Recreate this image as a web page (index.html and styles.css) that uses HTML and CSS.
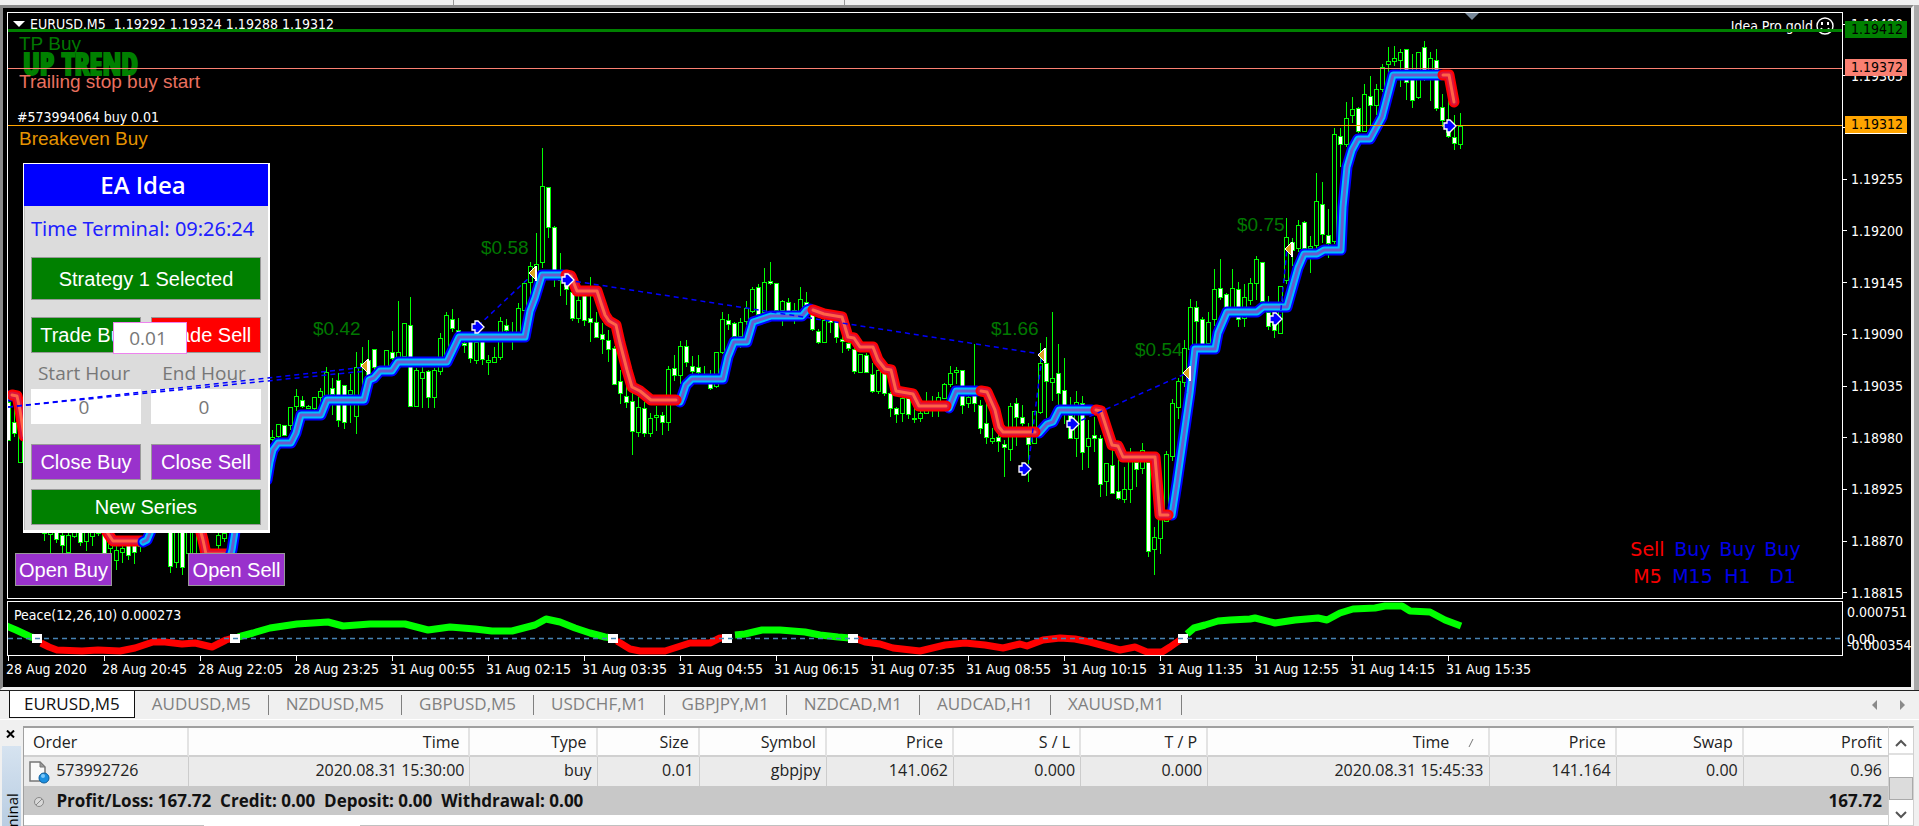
FILE: index.html
```html
<!DOCTYPE html>
<html lang="en">
  <head>
    <meta charset="UTF-8" />
    <meta name="viewport" content="width=device-width, initial-scale=1.0" />
    <title>EURUSD,M5</title>
    <link rel="stylesheet" href="styles.css">
  </head>
  <body>
    <div class="toolbar-edge">
      <span></span>
      <span></span>
    </div>

    <main class="chart-window">
      <section class="plot" id="plot">
        <svg class="layer" id="candles"></svg>

        <div class="chart-title">
          <svg width="12" height="6" viewBox="0 0 12 6">
            <path d="M0 0h12L6 6z" fill="#fff" />
          </svg>
          <span>EURUSD,M5&nbsp; 1.19292 1.19324 1.19288 1.19312</span>
        </div>
        <div class="expert">
          <span>Idea Pro gold</span>
          <svg width="18" height="18" viewBox="0 0 18 18" fill="none" stroke="#fff">
            <circle cx="9" cy="9" r="8" stroke-width="1.4" />
            <path d="M5 11c1 3 7 3 8 0" stroke-width="1.4" />
            <path d="M6 5v3M12 5v3" stroke-width="2" />
          </svg>
        </div>

        <form class="ea-panel">
          <h1 class="ea-title">EA Idea</h1>
          <div class="ea-body">
            <div class="ea-time">Time Terminal: 09:26:24</div>
            <button type="button" class="btn green strategy">Strategy 1 Selected</button>
            <div class="ea-row trade">
              <button type="button" class="btn green">Trade Buy</button>
              <button type="button" class="btn red">Trade Sell</button>
              <input class="lot" type="text" value="0.01" aria-label="Lot size" />
            </div>
            <div class="ea-row hours">
              <label for="startHour">Start Hour</label>
              <label for="endHour">End Hour</label>
              <input id="startHour" type="text" value="0" />
              <input id="endHour" type="text" value="0" />
            </div>
            <div class="ea-row close">
              <button type="button" class="btn purple">Close Buy</button>
              <button type="button" class="btn purple">Close Sell</button>
            </div>
            <button type="button" class="btn green">New Series</button>
          </div>
        </form>

        <div class="open-buttons">
          <button type="button" class="btn purple">Open Buy</button>
          <button type="button" class="btn purple">Open Sell</button>
        </div>

        <div class="signals">
          <span class="sell">Sell</span><span>Buy</span><span>Buy</span><span>Buy</span>
          <span class="sell">M5</span><span>M15</span><span>H1</span><span>D1</span>
        </div>

        <svg class="layer overlay" id="trades"></svg>
      </section>

      <aside class="price-axis">
        <ul>
          <li>1.19420</li>
          <li>1.19365</li>
          <li>1.19310</li>
          <li>1.19255</li>
          <li>1.19200</li>
          <li>1.19145</li>
          <li>1.19090</li>
          <li>1.19035</li>
          <li>1.18980</li>
          <li>1.18925</li>
          <li>1.18870</li>
          <li>1.18815</li>
        </ul>
        <span class="tag tp">1.19412</span>
        <span class="tag trailing">1.19372</span>
        <span class="tag breakeven">1.19312</span>
      </aside>

      <section class="indicator">
        <svg class="layer" id="indicator"></svg>
        <span class="indicator-name">Peace(12,26,10) 0.000273</span>
      </section>

      <aside class="indicator-axis">
        <span class="max">0.000751</span>
        <span class="zero">0.00</span>
        <span class="min">-0.000354</span>
      </aside>

      <ol class="time-axis">
        <li>28 Aug 2020</li>
        <li>28 Aug 20:45</li>
        <li>28 Aug 22:05</li>
        <li>28 Aug 23:25</li>
        <li>31 Aug 00:55</li>
        <li>31 Aug 02:15</li>
        <li>31 Aug 03:35</li>
        <li>31 Aug 04:55</li>
        <li>31 Aug 06:15</li>
        <li>31 Aug 07:35</li>
        <li>31 Aug 08:55</li>
        <li>31 Aug 10:15</li>
        <li>31 Aug 11:35</li>
        <li>31 Aug 12:55</li>
        <li>31 Aug 14:15</li>
        <li>31 Aug 15:35</li>
      </ol>
    </main>

    <nav class="chart-tabs">
      <a href="#" class="active">EURUSD,M5</a>
      <a href="#">AUDUSD,M5</a>
      <a href="#">NZDUSD,M5</a>
      <a href="#">GBPUSD,M5</a>
      <a href="#">USDCHF,M1</a>
      <a href="#">GBPJPY,M1</a>
      <a href="#">NZDCAD,M1</a>
      <a href="#">AUDCAD,H1</a>
      <a href="#">XAUUSD,M1</a>
      <div class="tab-scroll">
        <button type="button" aria-label="Scroll tabs left">
          <svg width="5" height="10" viewBox="0 0 5 10"><path d="M5 0v10L0 5z" fill="#8a8a8a" /></svg>
        </button>
        <button type="button" aria-label="Scroll tabs right">
          <svg width="5" height="10" viewBox="0 0 5 10"><path d="M0 0v10l5-5z" fill="#8a8a8a" /></svg>
        </button>
      </div>
    </nav>

    <section class="terminal">
      <div class="terminal-side">
        <button type="button" aria-label="Close">
          <svg width="9" height="8" viewBox="0 0 9 8" fill="none" stroke="#000" stroke-width="2">
            <path d="M1 0.5l7 7M8 0.5l-7 7" />
          </svg>
        </button>
        <div class="terminal-name"><span>Terminal</span></div>
      </div>

      <div class="orders">
        <table>
          <colgroup>
            <col class="w-order" />
            <col class="w-time" />
            <col class="w-price" />
            <col class="w-size" />
            <col class="w-price" />
            <col class="w-price" />
            <col class="w-price" />
            <col class="w-price" />
            <col class="w-time" />
            <col class="w-price" />
            <col class="w-price" />
            <col class="w-profit" />
          </colgroup>
          <thead>
            <tr>
              <th>Order</th>
              <th>Time</th>
              <th>Type</th>
              <th>Size</th>
              <th>Symbol</th>
              <th>Price</th>
              <th>S / L</th>
              <th>T / P</th>
              <th class="sorted">Time
                <svg width="6" height="10" viewBox="0 0 6 10"><path d="M1 9l4-8" stroke="#777" fill="none" /></svg>
              </th>
              <th>Price</th>
              <th>Swap</th>
              <th>Profit</th>
            </tr>
          </thead>
          <tbody>
            <tr>
              <td>
                <svg width="22" height="24" viewBox="0 0 22 24">
                  <path d="M2 2h10l5 5v14H2z" fill="#fafafa" stroke="#777" stroke-width="1.5" />
                  <path d="M12 2v5h5z" fill="#999" stroke="#777" />
                  <circle cx="16" cy="18" r="5" fill="#1b8fe0" stroke="#0c5c9a" />
                  <circle cx="15" cy="16" r="2" fill="#7cc8f8" />
                </svg>
                <span>573992726</span>
              </td>
              <td>2020.08.31 15:30:00</td>
              <td>buy</td>
              <td>0.01</td>
              <td>gbpjpy</td>
              <td>141.062</td>
              <td>0.000</td>
              <td>0.000</td>
              <td>2020.08.31 15:45:33</td>
              <td>141.164</td>
              <td>0.00</td>
              <td>0.96</td>
            </tr>
          </tbody>
          <tfoot>
            <tr>
              <td colspan="11">
                <svg width="22" height="12" viewBox="0 0 22 12" fill="none" stroke="#888">
                  <circle cx="11" cy="6" r="4.5" fill="#d8d8d8" />
                  <path d="M8 9l6-6" />
                </svg>
                <span>Profit/Loss: 167.72&nbsp; Credit: 0.00&nbsp; Deposit: 0.00&nbsp; Withdrawal: 0.00</span>
              </td>
              <td>167.72</td>
            </tr>
          </tfoot>
        </table>
        <div class="terminal-edge"><span></span></div>
      </div>

      <div class="scrollbar">
        <button type="button" aria-label="Scroll up">
          <svg width="12" height="8" viewBox="0 0 12 8" fill="none" stroke="#555" stroke-width="2"><path d="M1 7l5-5 5 5" /></svg>
        </button>
        <div class="track"></div>
        <div class="thumb"></div>
        <button type="button" aria-label="Scroll down">
          <svg width="12" height="8" viewBox="0 0 12 8" fill="none" stroke="#555" stroke-width="2"><path d="M1 1l5 5 5-5" /></svg>
        </button>
      </div>
    </section>

    <script src="chart.js"></script>
  </body>
</html>
```

FILE: styles.css
```css
* {
  margin: 0;
  padding: 0;
  box-sizing: border-box;
}

body {
  min-height: 100vh;
  display: flex;
  flex-direction: column;
  background: #f0f0f0;
  font-family: "Open Sans", sans-serif;
  overflow: hidden;
}

button {
  font: inherit;
  cursor: pointer;
}

.toolbar-edge {
  height: 5px;
  display: flex;
  background: #f0f0f0;
}

.toolbar-edge span {
  width: 454px;
  border-right: 1px solid #999;
}

.toolbar-edge span + span {
  width: 391px;
}

/* chart window */

.chart-window {
  flex: 1;
  display: grid;
  grid-template-columns: 1fr 68px;
  grid-template-rows: 1fr 55px 29px;
  row-gap: 2px;
  padding: 4px 0 0 4px;
  margin-right: 5px;
  background: #000;
  color: #fff;
  border-top: 3px solid #8a8a8a;
  border-left: 3px solid #8a8a8a;
  border-right: 3px solid #f0f0f0;
  border-bottom: 3px solid #f0f0f0;
  outline: 5px solid #a9a9a9;
  outline-offset: 0;
  clip-path: inset(0 -5px 0 0);
  font-family: "DejaVu Sans Condensed", "Noto Sans", sans-serif;
  font-size: 14px;
  line-height: 16px;
}

.plot,
.indicator {
  position: relative;
  border: 1px solid #fff;
  overflow: hidden;
}

.plot {
  min-height: 587px;
}

.layer {
  position: absolute;
  top: 0;
  left: 0;
  width: 100%;
  height: 100%;
}

.overlay {
  pointer-events: none;
}

.chart-title {
  position: absolute;
  top: 3px;
  left: 5px;
  display: flex;
  align-items: center;
  gap: 5px;
}

.expert {
  position: absolute;
  top: 4px;
  right: 8px;
  display: flex;
  align-items: center;
  gap: 3px;
}

.chart-text {
  font-family: "Liberation Sans", sans-serif;
  font-size: 19px;
}

.profit-text {
  font-family: "Liberation Sans", sans-serif;
  font-size: 19px;
  fill: #007800;
}

.order-text {
  font-size: 14px;
  fill: #fff;
}

.trend-text {
  font-family: Impact, "Open Sans Condensed", "Roboto Condensed", "Liberation Sans", sans-serif;
  font-size: 30px;
  font-weight: 700;
  fill: #008000;
  stroke: #008000;
  stroke-width: 2px;
}

/* expert advisor panel */

.ea-panel {
  position: absolute;
  top: 150px;
  left: 15px;
  width: 247px;
  background: #dcdcdc;
  border: 1px solid #fff;
  border-right-width: 2px;
  border-bottom-width: 3px;
}

.ea-title {
  height: 42px;
  background: #0000ff;
  text-align: center;
  padding-right: 6px;
  font: 600 24px/42px "Open Sans", sans-serif;
}

.ea-body {
  display: flex;
  flex-direction: column;
  padding: 0 7px 5px 6px;
  border-left: 1px solid #bbb;
}

.ea-time {
  height: 51px;
  font: 20px/46px "Noto Sans", sans-serif;
  color: #2020ff;
  white-space: nowrap;
}

.btn {
  height: 36px;
  border: 1px solid #999;
  color: #fff;
  font-family: "Liberation Sans", sans-serif;
  font-size: 20px;
  white-space: nowrap;
}

.green {
  background: #008000;
}

.red {
  background: #ff0000;
}

.purple {
  background: #9932cc;
}

.strategy {
  height: 43px;
}

.ea-row {
  display: grid;
  grid-template-columns: 1fr 1fr;
  column-gap: 10px;
}

.ea-row input {
  width: 100%;
  height: 35px;
  border: 0;
  padding-right: 4px;
  background: #fff;
  color: #777;
  text-align: center;
  font: 19px "Open Sans", sans-serif;
}

.trade {
  position: relative;
  margin-top: 17px;
}

.trade .lot {
  position: absolute;
  top: 5px;
  left: 82px;
  width: 74px;
  height: 32px;
  border: 1px solid #ee82ee;
}

.hours label {
  height: 36px;
  padding-right: 4px;
  line-height: 40px;
  text-align: center;
  color: #777;
  font-family: "Open Sans", sans-serif;
  font-size: 19px;
}

.close {
  margin: 20px 0 9px;
}

.open-buttons {
  position: absolute;
  top: 540px;
  left: 7px;
  display: flex;
  gap: 76px;
}

.open-buttons .btn {
  width: 97px;
  height: 33px;
}

.signals {
  position: absolute;
  right: 37px;
  bottom: 8px;
  display: grid;
  grid-template-columns: repeat(4, 45px);
  text-align: center;
  font: 19px/27px "DejaVu Sans", sans-serif;
  color: #0000e8;
}

.signals .sell {
  color: #f80000;
}

/* axes */

.price-axis,
.indicator-axis {
  position: relative;
}

.price-axis ul {
  height: calc(100% + 2px);
  padding: 4px 0 0;
  display: flex;
  flex-direction: column;
  justify-content: space-between;
  list-style: none;
}

.price-axis li {
  display: flex;
  align-items: center;
  gap: 4px;
}

.price-axis li::before {
  content: "";
  width: 4px;
  height: 1px;
  background: #fff;
}

.tag {
  position: absolute;
  left: 2px;
  width: 62px;
  height: 17px;
  padding-left: 6px;
  color: #000;
}

.tag.tp {
  top: 9px;
  background: #008000;
}

.tag.trailing {
  top: 47px;
  background: #fa8072;
}

.tag.breakeven {
  top: 104px;
  height: 18px;
  background: #ffa500;
  border-bottom: 1px solid #fff;
}

.indicator-name {
  position: absolute;
  top: 5px;
  left: 6px;
}

.indicator-axis span {
  position: absolute;
  left: 4px;
  white-space: nowrap;
}

.indicator-axis .max {
  top: 3px;
}

.indicator-axis .zero {
  top: 30px;
}

.indicator-axis .min {
  top: 36px;
}

.time-axis {
  grid-column: 1 / -1;
  display: flex;
  list-style: none;
  margin: -2px 0 0 -1px;
}

.time-axis li {
  width: 96px;
  flex: none;
  white-space: nowrap;
}

.time-axis li::before {
  content: "";
  display: block;
  width: 1px;
  height: 5px;
  margin-left: 2px;
  background: #fff;
}

/* chart tabs */

.chart-tabs {
  height: 29px;
  display: flex;
  align-items: flex-start;
  padding-left: 9px;
  border-top: 1px solid #222;
  font-size: 17px;
  line-height: 26px;
}

.chart-tabs a {
  position: relative;
  padding: 0 18px 0 17px;
  color: #808080;
  text-decoration: none;
}

.chart-tabs a:not(.active)::after {
  content: "";
  position: absolute;
  top: 4px;
  right: 0;
  width: 1px;
  height: 20px;
  background: #808080;
}

.chart-tabs .active {
  padding: 0 14px;
  background: #fff;
  color: #111;
  border: 1px solid #111;
  border-top: 0;
}

.tab-scroll {
  margin-left: auto;
  padding-right: 4px;
  display: flex;
  gap: 3px;
}

.tab-scroll button {
  width: 25px;
  border: 0;
  background: none;
}

/* terminal */

.terminal {
  height: 107px;
  display: flex;
  padding: 6px 5px 0 0;
  border-top: 1px solid #fff;
  overflow: hidden;
}

.terminal-side {
  width: 23px;
  display: flex;
  flex-direction: column;
}

.terminal-side button {
  height: 20px;
  border: 0;
  background: none;
  line-height: 8px;
  padding: 0 3px 6px 0;
}

.terminal-name {
  flex: 1;
  margin: 0 2px;
  background: linear-gradient(#d6e3f0, #b9cde2);
  overflow: hidden;
}

.terminal-name span {
  display: block;
  margin-top: 47px;
  writing-mode: vertical-rl;
  transform: rotate(180deg);
  height: 66px;
  font-size: 15px;
  line-height: 20px;
  text-align: right;
}

.orders {
  flex: 1;
  display: flex;
  flex-direction: column;
  justify-content: space-between;
  background: #fff;
  border-top: 2px solid #a0a0a0;
  border-left: 1px solid #a0a0a0;
}

table {
  width: 100%;
  table-layout: fixed;
  border-collapse: separate;
  border-spacing: 0;
  font-size: 16px;
  line-height: 22px;
  color: #222;
}

.w-order {
  width: 165px;
}

.w-time {
  width: 281px;
}

.w-price {
  width: 127px;
}

.w-size {
  width: 102px;
}

.w-profit {
  width: 144px;
}

th,
td {
  height: 29px;
  text-align: right;
  font-weight: 400;
  white-space: nowrap;
}

th {
  background: #fdfdfd;
  padding-right: 9px;
  border-right: 2px solid #e3e3e3;
  border-bottom: 2px solid #d0d0d0;
}

td {
  background: #ebebeb;
  padding: 0 5px 3px 0;
  border-right: 1px solid #ccc;
}

th:first-child,
td:first-child {
  text-align: left;
}

th:first-child {
  padding-left: 9px;
}

td:first-child {
  padding-left: 4px;
}

td svg {
  vertical-align: middle;
  margin: -4px 2px -4px 0;
}

.sorted svg {
  margin: 0 5px 0 14px;
}

th:last-child,
td:last-child {
  border-right: 0;
  padding-right: 6px;
}

tfoot td {
  padding-bottom: 0;
  background: #c8c8c8;
  border: 0;
  font-size: 17px;
  font-weight: 700;
  color: #111;
}

.terminal-edge {
  height: 1px;
  background: #c0c0c0;
}

.terminal-edge span {
  display: block;
  width: 156px;
  height: 1px;
  margin-left: 180px;
  background: #fff;
}

.scrollbar {
  width: 26px;
  display: flex;
  flex-direction: column;
  border: 1px solid #d0d0d0;
  border-top: 2px solid #a0a0a0;
  background: #fff;
}

.scrollbar button {
  height: 25px;
  border: 0;
  background: #fff;
  line-height: 20px;
}

.track {
  height: 24px;
  border-top: 2px solid #e0e0e0;
}

.thumb {
  flex: 1;
  background: #dcdcdc;
  border: 1px solid #aaa;
}
```

FILE: chart.js
```js
// Candles: [high, body top, body bottom, low, up], one every 6px from x.
const STEP = 6;
const SERIES = [
  { x: 8, bars: [[400,402,440,441,0],[400,422,433,437,0],[430,433,462,463,1]] },
  { x: 44, bars: [
    [528,530,533,541,1],[528,530,534,553,1],[528,530,539,543,0],[528,535,545,553,0],
    [528,535,552,554,1],[528,530,536,538,1],[528,530,542,546,0],[528,530,541,551,1],
    [528,530,536,546,1],[520,530,533,536,1],[520,525,553,554,0],[530,535,548,556,1],
    [545,550,560,570,1],[540,548,552,563,1],[540,545,555,560,0],[540,545,552,564,0],
    [540,543,546,552,1]] },
  { x: 170, bars: [
    [525,528,566,573,0],[525,528,562,568,1],[525,528,567,575,0],[525,528,553,560,1],
    [525,528,553,555,1]] },
  { x: 218, bars: [[530,535,545,552,1],[530,533,538,542,1]] },
  { x: 272, bars: [
    [430,437,439,441,1],[424,424,436,440,1],[425,425,435,436,0],[407,407,425,430,1],
    [389,396,406,411,1],[396,400,406,408,0],[405,406,408,409,1],[397,397,408,412,1],
    [388,391,397,405,1],[367,372,395,396,1],[378,388,394,415,0],[373,380,420,427,0],
    [385,385,422,429,0],[374,390,394,423,1],[352,367,416,434,1],[347,363,367,395,0],
    [340,360,375,378,0],[349,349,367,371,0],[368,370,372,375,1],[350,350,369,370,1],
    [331,352,358,360,0],[301,352,357,360,1],[323,323,356,358,1],[297,325,406,407,0],
    [368,370,406,407,1],[365,372,378,408,1],[370,371,397,408,0],[368,370,397,408,1],
    [333,338,371,375,1],[312,315,355,360,1],[309,319,328,332,0],[318,330,332,333,0],
    [340,343,345,353,0],[338,340,358,363,0],[338,342,360,364,1],[335,338,359,365,0],
    [355,360,362,375,1],[347,357,362,363,1],[317,321,357,360,1],[319,325,330,335,0],
    [322,332,336,350,1],[303,308,332,334,1],[281,283,310,311,1],[262,266,282,296,1],
    [233,264,275,280,1],[148,186,262,268,1],[187,187,227,238,0],[226,227,275,287,0],
    [253,275,280,296,0],[280,282,289,305,0],[285,292,318,321,0],[296,300,318,323,1],
    [290,294,320,326,0],[277,318,322,342,0],[312,322,337,338,0],[323,334,339,354,0],
    [330,340,349,362,0],[346,348,384,385,0],[370,381,393,404,0],[385,396,402,408,0],
    [392,401,431,455,0],[397,407,432,437,1],[402,408,433,437,0],[413,418,433,437,1],
    [406,415,417,431,1],[412,415,422,435,0],[366,369,422,431,1],[355,368,375,381,0],
    [341,346,375,384,1],[340,346,362,367,0],[356,366,371,374,0],[355,367,372,376,0],
    [366,374,376,380,1],[370,383,388,390,0],[352,352,386,388,1],[312,319,352,354,1],
    [314,320,324,330,0],[322,323,336,339,0],[318,322,336,348,1],[301,308,321,325,1],
    [287,289,311,313,1],[284,287,314,316,0],[268,282,312,314,1],[262,281,283,285,0],
    [283,283,310,312,0],[300,301,310,326,1],[298,302,311,315,0],[303,310,314,324,1],
    [287,299,311,315,1],[292,302,307,312,0],[310,312,329,331,0],[329,331,342,344,0],
    [318,320,342,342,1],[316,318,322,333,0],[318,320,337,343,0],[330,339,341,353,0],
    [338,343,348,351,0],[345,349,371,374,0],[354,354,372,372,1],[353,355,372,373,0],
    [363,374,391,393,0],[368,370,391,394,1],[370,372,393,396,0],[392,393,408,417,0],
    [407,408,414,423,0],[395,398,413,422,1],[396,398,414,419,0],[405,418,419,423,1],
    [411,413,418,422,1],[392,410,413,414,1],[396,402,406,417,0],[392,397,405,417,1],
    [383,384,398,399,1],[366,373,384,387,1],[367,370,372,384,1],[370,370,405,414,0],
    [395,397,403,408,1],[344,390,403,412,0],[400,405,428,434,0],[403,423,437,444,0],
    [428,438,441,444,1],[433,437,441,452,0],[440,444,447,477,0],[403,406,449,461,1],
    [398,403,417,446,0],[405,417,423,426,0],[423,437,444,482,0],[411,411,443,444,1],
    [343,363,412,414,1],[337,363,381,418,0],[312,378,382,401,1],[344,373,393,407,0],
    [358,390,407,424,0],[397,415,438,439,0],[391,402,438,457,1],[396,403,452,470,0],
    [420,438,446,468,1],[417,435,438,452,0],[435,438,484,497,0],[463,463,481,496,1],
    [450,465,493,494,0],[460,491,498,500,0],[467,489,499,503,1],[448,455,489,503,1],
    [455,462,469,487,0],[443,450,468,474,1],[460,462,551,557,0],[527,537,549,575,1],
    [515,517,538,554,1],[451,454,521,522,1],[399,403,456,461,1],[378,381,407,419,1],
    [340,348,382,387,1],[299,307,349,350,1],[301,307,321,345,0],[317,319,344,346,0],
    [312,322,343,346,1],[269,289,319,326,1],[259,288,297,300,0],[293,294,308,310,0],
    [269,288,307,310,1],[282,289,319,327,0],[284,297,318,327,1],[278,283,300,305,1],
    [256,259,283,300,1],[262,262,301,302,0],[296,312,326,330,0],[320,322,330,338,0],
    [286,286,333,333,1],[218,237,280,284,1],[238,242,250,266,0],[220,225,248,252,1],
    [221,222,248,250,0],[236,246,248,273,1],[173,201,245,248,1],[182,204,234,243,0],
    [209,235,243,258,0],[128,134,241,244,1],[128,136,144,167,0],[102,118,144,147,1],
    [97,109,115,123,1],[107,108,131,133,0],[84,94,131,132,1],[76,96,105,125,0],
    [84,89,105,115,1],[64,67,89,92,1],[47,61,64,75,1],[46,58,61,66,1],
    [49,52,60,87,1],[49,49,82,100,0],[54,75,100,108,0],[52,52,97,99,1],
    [41,47,70,81,0],[52,58,70,101,1],[49,60,108,111,0],[94,107,120,127,0],
    [100,125,136,138,0],[115,137,143,150,0],[113,126,144,149,1]] },
];

// Trend ribbon, each part drawn as three stacked strokes.
const UP = ["#0000ff", "#00bfff", "#6a5acd"];
const DOWN = ["#ff0000", "#dc143c", "#ff6347"];
const RIBBON = [
  [UP, "5,396 11,396"],
  [DOWN, "12,395 17,396 20,410 24,436"],
  [DOWN, "104,525 107,532 113,541 142,541"],
  [UP, "143,542 147,540 150,533 153,525"],
  [DOWN, "199,525 203,540 206,554 228,554"],
  [UP, "229,560 232,550 236,525"],
  [UP, "267,480 270,462 273,450 278,443 291,443 296,433 301,415 321,415 327,400 364,400 369,380 374,378 380,371 392,371 398,362 447,362 459,337 525,337 530,311 535,298 542,275 563,275"],
  [UP, "680,402 682,397 686,385 692,379 723,379 728,357 734,342 747,342 753,322 765,318 771,316 802,316 807,310 810,309"],
  [UP, "949,408 956,391 977,391"],
  [UP, "1039,433 1047,424 1053,422 1059,410 1092,410"],
  [UP, "1172,515 1177,483 1190,393 1195,349 1215,349 1218,333 1227,312 1257,312 1263,307 1287,307 1298,268 1304,254 1317,254 1324,250 1341,250 1343,207 1347,167 1352,150 1358,139 1370,139 1382,117 1393,75 1440,75"],
  [DOWN, "566,275 571,276 577,291 597,291 605,315 609,321 616,325 620,343 627,370 632,387 640,391 651,400 676,400"],
  [DOWN, "813,310 824,314 842,317 848,337 854,338 860,347 873,347 878,360 885,369 891,370 896,391 913,394 919,406 946,406"],
  [DOWN, "981,391 987,392 995,410 999,427 1003,432 1035,432"],
  [DOWN, "1096,410 1101,411 1112,445 1118,446 1123,457 1155,457 1160,515 1168,515"],
  [DOWN, "1443,75 1449,75 1454,102"],
];

const TRADES = [
  [8, 407, 366, 367],
  [8, 407, 366, 371],
  [478, 326, 533, 274],
  [567, 280, 1040, 354],
  [1028, 469, 1042, 356],
  [1073, 424, 1187, 373],
  [1280, 319, 1287, 249],
];
const ENTRIES = [[478, 327], [568, 280], [1025, 469], [1073, 424], [1276, 319], [1450, 126]];
const EXITS = [[365, 366], [533, 273], [1042, 355], [1187, 373], [1289, 249]];
const PROFITS = [
  [313, 335, "$0.42"],
  [481, 254, "$0.58"],
  [991, 335, "$1.66"],
  [1135, 356, "$0.54"],
  [1237, 231, "$0.75"],
];

const PEACE = [
  ["#00ff00", "4,625 16,630 31,637 37,638"],
  ["#ff0000", "41,643 49,647 57,650 82,651 98,650 120,651 135,648 153,642 165,642 182,644 195,643 212,647 226,640 233,638"],
  ["#00ff00", "238,637 253,633 270,628 297,624 328,622 343,626 370,624 405,624 428,630 450,627 475,629 492,631 512,631 535,625 546,619 560,622 575,628 590,633 605,637 613,638"],
  ["#ff0000", "617,641 630,649 640,651 665,651 690,643 710,643 720,638 727,638"],
  ["#00ff00", "735,635 745,634 762,630 780,630 805,632 820,635 838,637 850,638"],
  ["#ff0000", "857,639 865,642 880,644 893,648 920,651 945,645 965,643 985,645 1003,648 1020,644 1027,646 1043,640 1060,638 1075,639 1090,642 1105,646 1120,650 1135,647 1147,652 1162,652 1170,647 1180,640"],
  ["#00ff00", "1187,634 1194,628 1205,625 1218,621 1230,620 1250,619 1255,618 1275,623 1295,620 1318,618 1327,620 1340,613 1353,609 1375,608 1385,606 1402,606 1410,611 1430,612 1445,620 1461,626"],
];
const CROSSES = [37, 235, 613, 727, 853, 1183];

function candle(x, [high, top, bottom, low, up]) {
  const height = Math.max(bottom - top, 1);
  return (
    `<path d="M${x + 0.5} ${high}V${low}" stroke="#00ff00"/>` +
    `<rect x="${x - 1.5}" y="${top + 0.5}" width="4" height="${height}" ` +
    `fill="${up ? "#000" : "#fff"}" stroke="#00ff00"/>`
  );
}

function ribbon([colors, points]) {
  return colors
    .map((color, i) => `<polyline points="${points}" stroke="${color}" stroke-width="${[11, 7, 3][i]}"/>`)
    .join("");
}

function entry([x, y]) {
  return `<path d="M${x - 6} ${y - 3}h3v-3h3l6 6-6 6h-3v-3h-3z" fill="#0000ff" stroke="#fff" stroke-width="1.3"/>`;
}

function exit([x, y]) {
  return `<path d="M${x + 3} ${y - 7}v14l-7-7z" fill="#daa520" stroke="#fff"/>` +
    `<path d="M${x + 3} ${y - 7}v15" stroke="#fff" stroke-width="2"/>`;
}

// Data is in window coordinates, the plots start at 8,13 and 8,602.
document.getElementById("candles").innerHTML =
  `<g transform="translate(-8 -13)">` +
  `<path d="M1465 13h14l-7 7z" fill="#778899"/>` +
  SERIES.map((s) => s.bars.map((bar, i) => candle(s.x + i * STEP, bar)).join("")).join("") +
  `<g fill="none" stroke-linejoin="round" stroke-linecap="round">${RIBBON.map(ribbon).join("")}</g>` +
  `<text class="chart-text" x="19" y="50" fill="#007800">TP Buy</text>` +
  `<text class="trend-text" x="23" y="75">UP TREND</text>` +
  `<text class="chart-text" x="19" y="88" fill="#e9705f">Trailing stop buy start</text>` +
  `<text class="order-text" x="17" y="122">#573994064 buy 0.01</text>` +
  `<text class="chart-text" x="19" y="145" fill="#e59400">Breakeven Buy</text>` +
  PROFITS.map(([x, y, text]) => `<text class="profit-text" x="${x}" y="${y}">${text}</text>`).join("") +
  `</g>`;

document.getElementById("trades").innerHTML =
  `<rect y="16" width="100%" height="3" fill="#008000"/>` +
  `<rect y="55" width="100%" height="1" fill="#fa8072"/>` +
  `<rect y="112" width="100%" height="1" fill="#ffa500"/>` +
  `<g transform="translate(-8 -13)">` +
  TRADES.map(([x1, y1, x2, y2]) =>
    `<line x1="${x1}" y1="${y1}" x2="${x2}" y2="${y2}" stroke="#0000ff" stroke-width="1.5" stroke-dasharray="5 4"/>`
  ).join("") +
  EXITS.map(exit).join("") +
  ENTRIES.map(entry).join("") +
  `</g>`;

document.getElementById("indicator").innerHTML =
  `<g transform="translate(-8 -602)">` +
  PEACE.map(([color, points]) =>
    `<polyline points="${points}" fill="none" stroke="${color}" stroke-width="7" stroke-linejoin="round"/>`
  ).join("") +
  CROSSES.map((x) => `<rect x="${x - 5}" y="634" width="10" height="9" fill="#fff"/>`).join("") +
  `</g>` +
  `<line x1="0" y1="36.5" x2="100%" y2="36.5" stroke="#4682b4" stroke-width="1.5" stroke-dasharray="5 4"/>`;
```
